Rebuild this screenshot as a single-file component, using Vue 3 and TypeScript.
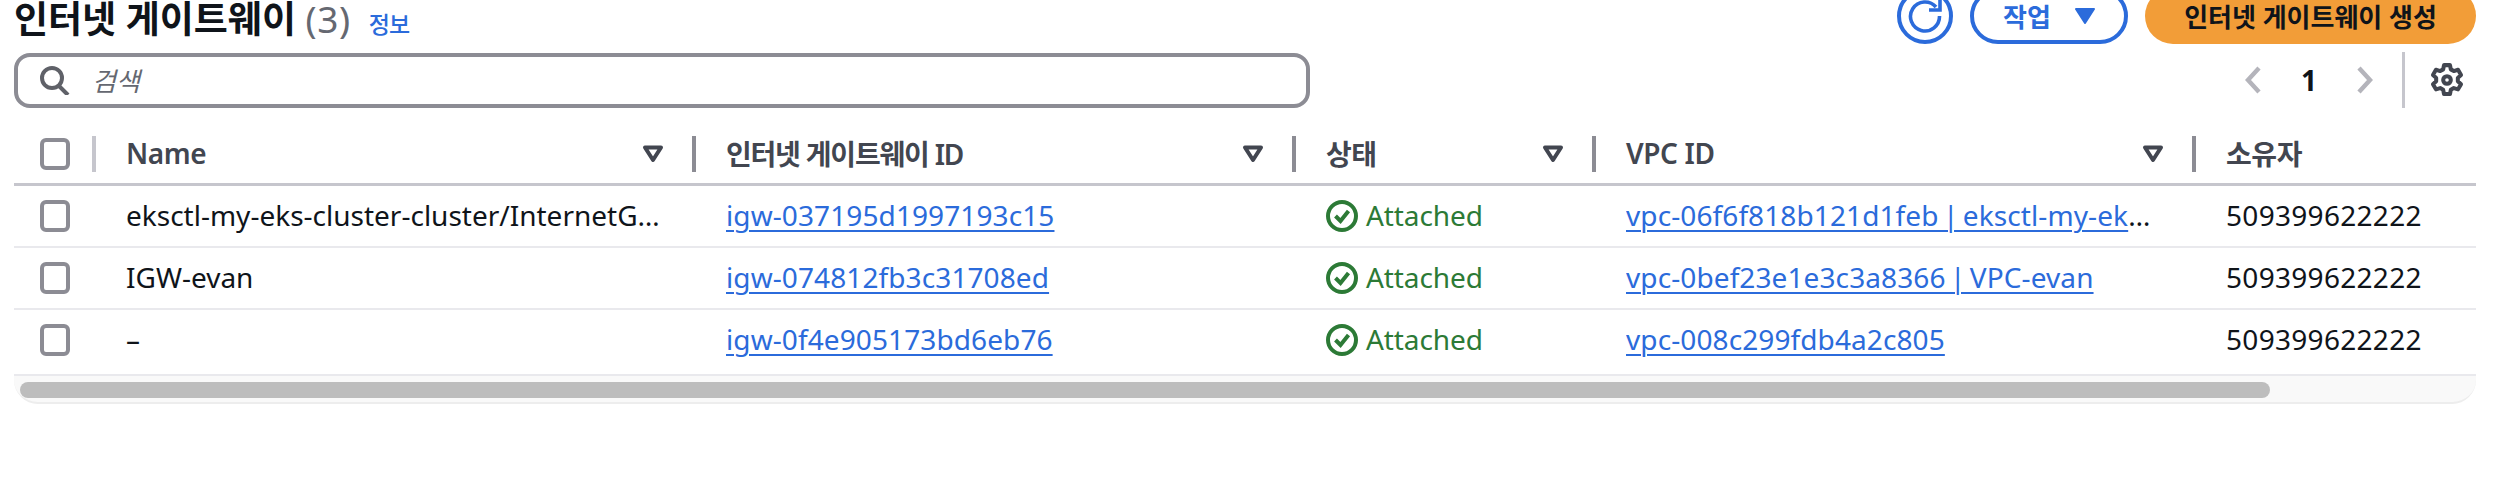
<script setup lang="ts">
interface GatewayRow {
  name: string
  id: string
  vpc: string
}

const columns = ['Name', '인터넷 게이트웨이 ID', '상태', 'VPC ID', '소유자']

const rows: GatewayRow[] = [
  {
    name: 'eksctl-my-eks-cluster-cluster/InternetGateway',
    id: 'igw-037195d1997193c15',
    vpc: 'vpc-06f6f818b121d1feb | eksctl-my-eks-cluster-cluster/VPC',
  },
  { name: 'IGW-evan', id: 'igw-074812fb3c31708ed', vpc: 'vpc-0bef23e1e3c3a8366 | VPC-evan' },
  { name: '–', id: 'igw-0f4e905173bd6eb76', vpc: 'vpc-008c299fdb4a2c805' },
]
</script>

<template>
  <div class="page">
    <header class="top">
      <div class="title">
        <h1>인터넷 게이트웨이 <span class="count">(3)</span></h1>
        <a class="info">정보</a>
      </div>
      <div class="actions">
        <button class="refresh" aria-label="새로 고침">
          <svg width="36" height="36" viewBox="0 0 36 36" fill="none" stroke="currentColor" stroke-width="3.6">
            <path d="M29 9A14.5 14.5 0 1 0 32.5 18" />
            <path d="M33 2v10H22" />
          </svg>
        </button>
        <button class="action-btn">
          작업
          <svg width="20" height="16" viewBox="0 0 20 16"><path d="M1 1h18L10 15z" fill="currentColor" stroke="currentColor" stroke-width="2" stroke-linejoin="round" /></svg>
        </button>
        <button class="create-btn">인터넷 게이트웨이 생성</button>
      </div>
    </header>

    <div class="tools">
      <div class="search">
        <svg width="30" height="30" viewBox="0 0 30 30" fill="none" stroke="currentColor" stroke-width="4">
          <circle cx="12" cy="13" r="10" />
          <path d="M19 21l9 9" />
        </svg>
        <span class="placeholder">검색</span>
      </div>
      <div class="pager">
        <svg class="chev" width="18" height="28" viewBox="0 0 18 28" fill="none" stroke="currentColor" stroke-width="4.4"><path d="M15 2L4 14l11 12" /></svg>
        <span class="page-num">1</span>
        <svg class="chev" width="18" height="28" viewBox="0 0 18 28" fill="none" stroke="currentColor" stroke-width="4.4"><path d="M3 2l11 12L3 26" /></svg>
      </div>
      <div class="gear-wrap">
        <svg width="34" height="34" viewBox="0 0 16 16" fill="none" stroke="currentColor" stroke-width="1.9" stroke-linejoin="round">
          <circle cx="8" cy="8" r="1.8" />
          <path d="M6.6 1h2.8l.4 2 1.4.8 2-.6 1.4 2.4-1.5 1.4v1.6l1.5 1.4-1.4 2.4-2-.6-1.4.8-.4 2H6.6l-.4-2-1.4-.8-2 .6L1.4 10l1.5-1.4V7L1.4 5.6 2.8 3.2l2 .6 1.4-.8z" />
        </svg>
      </div>
    </div>

    <div class="table">
      <div class="row head">
        <div class="cell check"><span class="box"></span></div>
        <div v-for="(col, i) in columns" :key="col" class="cell head-cell" :class="{ 'first-col': i === 0 }">
          <span class="label">{{ col }}</span>
          <svg v-if="i < 4" class="filter" width="22" height="18" viewBox="0 0 22 18" fill="none" stroke="currentColor" stroke-width="4" stroke-linejoin="round">
            <path d="M3 2.5h16L11 15z" />
          </svg>
        </div>
      </div>
      <div v-for="row in rows" :key="row.id" class="row body-row">
        <div class="cell check"><span class="box"></span></div>
        <div class="cell"><span class="clip name text">{{ row.name }}</span></div>
        <div class="cell"><a class="link text">{{ row.id }}</a></div>
        <div class="cell status">
          <svg width="32" height="32" viewBox="0 0 32 32" fill="none" stroke="currentColor" stroke-width="4">
            <circle cx="16" cy="16" r="14" />
            <path d="M9.5 16l5 5 8-10" />
          </svg>
          <span class="text">Attached</span>
        </div>
        <div class="cell"><span class="clip vpc text"><a class="link">{{ row.vpc }}</a></span></div>
        <div class="cell"><span class="digits text">509399622222</span></div>
      </div>
      <div class="scroll">
        <div class="thumb"></div>
      </div>
    </div>
  </div>
</template>

<style>
html, body { margin: 0; background: #fff; overflow: hidden; }
</style>

<style scoped>
.page { width: 2496px; height: 512px; margin-top: -20px; padding: 0 20px 0 14px; box-sizing: border-box; font-family: "Noto Sans", "Noto Sans CJK KR", sans-serif; font-size: 28px; color: #0f141a; }
.top { display: flex; justify-content: space-between; align-items: flex-start; height: 64px; }
.title { display: flex; align-items: baseline; gap: 18px; padding-top: 16px; }
h1 { margin: 0; font-size: 37px; line-height: 46px; font-weight: 700; }
.count { font-weight: 400; color: #656871; letter-spacing: 0.6px; }
.info { font-size: 23px; font-weight: 500; color: #2b6bdb; letter-spacing: -1px; }
.actions { display: flex; align-items: flex-start; padding-top: 8px; }
button { font-family: inherit; box-sizing: border-box; background: #fff; padding: 0; }
.refresh { width: 56px; height: 56px; border: 4px solid #2b6bdb; border-radius: 50%; color: #2b6bdb; display: flex; align-items: center; justify-content: center; }
.action-btn { width: 158px; height: 56px; margin-left: 17px; border: 4px solid #2b6bdb; border-radius: 28px; color: #2b6bdb; font-size: 26px; font-weight: 700; display: flex; align-items: center; justify-content: center; gap: 24px; }
.create-btn { width: 331px; height: 56px; margin-left: 17px; border: 0; border-radius: 28px; background: #f29d38; color: #0f141a; font-size: 26px; font-weight: 700; }
.tools { display: flex; align-items: center; height: 56px; margin-top: 8px; }
.search { width: 1296px; height: 55px; box-sizing: border-box; border: 4px solid #8c8c94; border-radius: 16px; display: flex; align-items: center; gap: 22px; padding-left: 22px; color: #5f6168; }
.placeholder { font-style: italic; font-size: 26px; color: #656871; }
.pager { display: flex; align-items: center; margin-left: auto; color: #b4b4bb; }
.page-num { width: 94px; text-align: center; font-weight: 700; color: #0f141a; }
.gear-wrap { height: 56px; margin-left: 28px; padding-left: 25px; padding-right: 12px; border-left: 3px solid #c6c6cd; display: flex; align-items: center; color: #424650; }
.table { margin-top: 28px; }
.row { display: grid; grid-template-columns: 78px 600px 600px 300px 600px 284px; }
.head { height: 47px; border-bottom: 3px solid #c6c6cd; }
.body-row { height: 60px; border-bottom: 2px solid #e9e9ed; box-sizing: content-box; }
.body-row:nth-of-type(4) { padding-bottom: 4px; }
.cell { display: flex; align-items: center; padding-left: 34px; min-width: 0; box-sizing: border-box; }
.check { padding-left: 26px; }
.box { width: 30px; height: 32px; box-sizing: border-box; border: 4px solid #8c8c94; border-radius: 6px; }
.head .check { height: 36px; }
.head-cell { position: relative; height: 36px; justify-content: space-between; padding-right: 28px; font-weight: 600; color: #424650; letter-spacing: -0.4px; }
.head-cell:nth-child(3) { letter-spacing: -1.2px; }
.head-cell::before { content: ""; position: absolute; left: 0; top: 0; bottom: 0; width: 4px; background: #8c8c94; }
.first-col::before { background: #c6c6cd; }
.label { margin-bottom: 3px; }
.filter { color: #424650; flex: none; }
.text { margin-bottom: 2px; }
.clip { display: block; white-space: nowrap; overflow: hidden; text-overflow: ellipsis; }
.name { width: 536px; }
.vpc { width: 530px; word-spacing: -3px; }
.link { color: #2b6bdb; text-decoration: underline; text-underline-offset: 4px; text-decoration-thickness: 2px; letter-spacing: 0.1px; }
.digits { letter-spacing: 0.3px; }
.status { gap: 8px; color: #2c7a36; letter-spacing: -0.1px; }
.scroll { height: 28px; box-sizing: border-box; padding: 6px 0 0 6px; background: #f9f9f9; border-bottom: 2px solid #ededed; border-radius: 0 0 24px 24px; }
.thumb { width: 2250px; height: 16px; background: #bdbdbd; border-radius: 8px; }
</style>
